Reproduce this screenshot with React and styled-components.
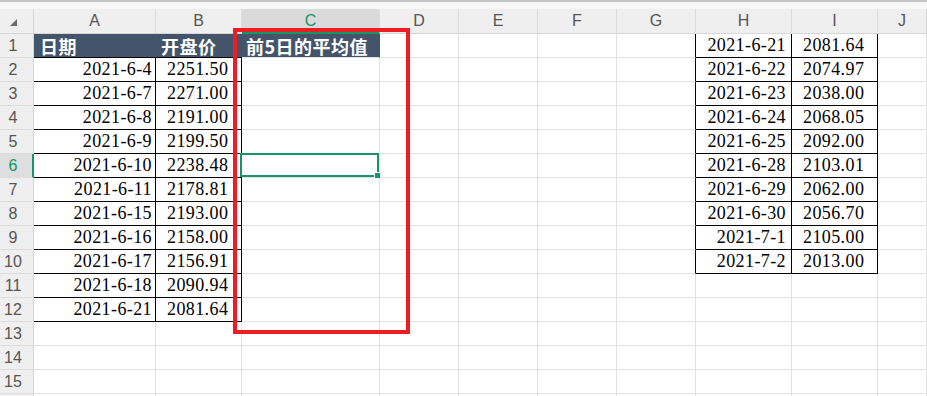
import React from "react";
import styled, { createGlobalStyle } from "styled-components";

const GREEN = "#169565";
const GRID = "#e1e1e1";
const DARK = "#44546a";

const GlobalStyle = createGlobalStyle`
  html, body {
    margin: 0;
    padding: 0;
    background: #fff;
    overflow: hidden;
  }
  * { box-sizing: border-box; }
`;

const COLS = ["A", "B", "C", "D", "E", "F", "G", "H", "I", "J"];
const WIDTHS = [122, 86, 138, 79, 79, 79, 79, 96, 86, 49];

const Sheet = styled.div`
  position: relative;
  width: 927px;
  height: 396px;
  overflow: hidden;
  display: grid;
  grid-template-columns: 34px ${WIDTHS.map((w) => w + "px").join(" ")};
  grid-template-rows: 9px 25px repeat(16, 24px);
  font-family: "Liberation Serif", serif;
`;

const TopStrip = styled.div`
  grid-column: 1 / -1;
  background: #f6f6f6;
  border-top: 2px solid #c4c4c4;
`;

const Corner = styled.div`
  background: #efefef;
  border-right: 1px solid #d6d6d6;
  border-bottom: 1px solid #d6d6d6;
  padding: 10px 0 0 10px;
  &::after {
    content: "";
    display: block;
    width: 0;
    height: 0;
    border-left: 7px solid transparent;
    border-bottom: 7px solid #6b6b6b;
  }
`;

const ColHead = styled.div`
  background: ${(p) => (p.$active ? "#dadada" : "#efefef")};
  color: ${(p) => (p.$active ? GREEN : "#555")};
  border-right: 1px solid #dcdcdc;
  border-bottom: ${(p) => (p.$active ? `2px solid ${GREEN}` : "1px solid #d6d6d6")};
  display: flex;
  align-items: center;
  justify-content: center;
  font-family: "Liberation Sans", sans-serif;
  font-size: 16px;
  padding-top: ${(p) => (p.$active ? "1px" : "0")};
`;

const RowHead = styled.div`
  background: ${(p) => (p.$active ? "#dedede" : "#efefef")};
  color: ${(p) => (p.$active ? GREEN : "#555")};
  border-right: ${(p) => (p.$active ? `2px solid ${GREEN}` : "1px solid #d6d6d6")};
  border-bottom: 1px solid #dcdcdc;
  display: flex;
  align-items: center;
  justify-content: center;
  padding-right: ${(p) => (p.$active ? "6px" : "7px")};
  font-family: "Liberation Sans", sans-serif;
  font-size: 16px;
`;

const Cell = styled.div`
  position: relative;
  background: ${(p) => p.$fill || "#fff"};
  border-right: 1px solid ${(p) => p.$rc || GRID};
  border-bottom: 1px solid ${(p) => p.$bc || GRID};
  display: flex;
  align-items: center;
  justify-content: ${(p) => (p.$align === "right" ? "flex-end" : "flex-start")};
  padding: 0 ${(p) => p.$pr || 0}px 0 ${(p) => p.$pl || 0}px;
  font-size: 18px;
  letter-spacing: 0.4px;
  color: #000;
  white-space: nowrap;
`;

const HeadText = styled.span`
  font-family: "Noto Sans CJK SC", sans-serif;
  font-weight: 700;
  font-size: 18px;
  letter-spacing: 0.5px;
  color: #fff;
`;

const Selection = styled.div`
  position: absolute;
  top: -1px;
  left: -2px;
  right: 0;
  bottom: 0;
  border: 2px solid ${GREEN};
  &::after {
    content: "";
    position: absolute;
    right: -4px;
    bottom: -4px;
    width: 6px;
    height: 6px;
    background: ${GREEN};
    outline: 1px solid #fff;
  }
`;

const Highlight = styled.div`
  position: absolute;
  left: 233px;
  top: 28px;
  width: 177px;
  height: 306px;
  border: 4px solid #ee1d25;
  pointer-events: none;
`;

const leftData = [
  ["2021-6-4", "2251.50"],
  ["2021-6-7", "2271.00"],
  ["2021-6-8", "2191.00"],
  ["2021-6-9", "2199.50"],
  ["2021-6-10", "2238.48"],
  ["2021-6-11", "2178.81"],
  ["2021-6-15", "2193.00"],
  ["2021-6-16", "2158.00"],
  ["2021-6-17", "2156.91"],
  ["2021-6-18", "2090.94"],
  ["2021-6-21", "2081.64"],
];

const rightData = [
  ["2021-6-21", "2081.64"],
  ["2021-6-22", "2074.97"],
  ["2021-6-23", "2038.00"],
  ["2021-6-24", "2068.05"],
  ["2021-6-25", "2092.00"],
  ["2021-6-28", "2103.01"],
  ["2021-6-29", "2062.00"],
  ["2021-6-30", "2056.70"],
  ["2021-7-1", "2105.00"],
  ["2021-7-2", "2013.00"],
];

const headers = { A: "日期", B: "开盘价", C: "前5日的平均值" };

// works out what each cell shows and which borders are black
const cellFor = (r, col) => {
  const props = {};
  let content = null;

  if (r === 1 && headers[col]) {
    props.$fill = DARK;
    props.$rc = DARK;
    props.$bc = col === "C" ? GRID : "#000";
    props.$pl = col === "A" ? 6 : col === "B" ? 5 : 4;
    content = <HeadText>{headers[col]}</HeadText>;
  }

  if (r >= 2 && r <= 12 && (col === "A" || col === "B")) {
    const [d, v] = leftData[r - 2];
    props.$rc = "#000";
    props.$bc = "#000";
    if (col === "A") {
      props.$align = "right";
      props.$pr = 3;
      content = d;
    } else {
      props.$pl = 11;
      content = v;
    }
  }

  if (r <= 10 && col === "G") props.$rc = "#000";

  if (r <= 10 && (col === "H" || col === "I")) {
    const [d, v] = rightData[r - 1];
    props.$rc = "#000";
    props.$bc = "#000";
    if (col === "H") {
      props.$align = "right";
      props.$pr = 5;
      content = d;
    } else {
      props.$pl = 11;
      content = v;
    }
  }

  return { props, content };
};

const SEL_ROW = 6;
const SEL_COL = "C";
const LAST_ROW = 16;

const App = () => {
  const rows = [];
  for (let r = 1; r <= LAST_ROW; r++) {
    // the last row is only a sliver at the bottom edge, its number isn't visible
    rows.push(
      <RowHead key={"h" + r} $active={r === SEL_ROW}>
        {r < LAST_ROW ? r : null}
      </RowHead>
    );
    COLS.forEach((col) => {
      const { props, content } = cellFor(r, col);
      const sel = r === SEL_ROW && col === SEL_COL;
      rows.push(
        <Cell key={col + r} {...props}>
          {content}
          {sel ? <Selection /> : null}
        </Cell>
      );
    });
  }

  return (
    <>
      <GlobalStyle />
      <Sheet>
        <TopStrip />
        <Corner />
        {COLS.map((c) => (
          <ColHead key={c} $active={c === SEL_COL}>
            {c}
          </ColHead>
        ))}
        {rows}
        <Highlight />
      </Sheet>
    </>
  );
};

export default App;
